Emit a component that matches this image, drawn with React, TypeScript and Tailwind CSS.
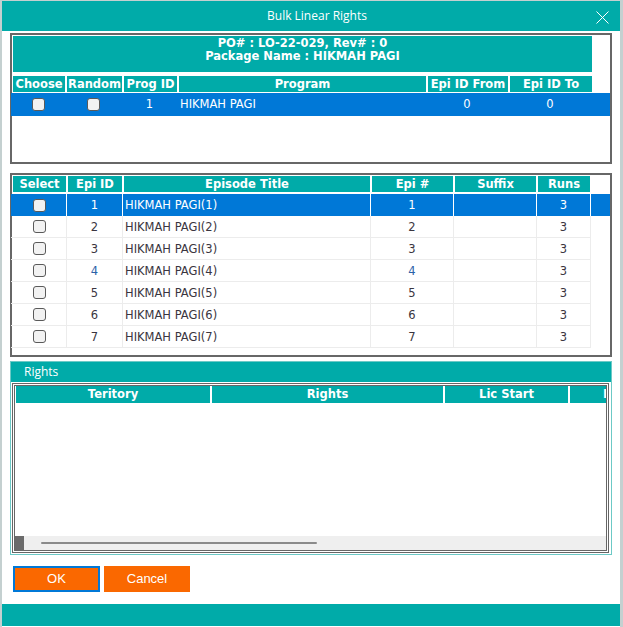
import React from "react";

const TEAL = "bg-[#00aba9]";

function Check() {
  return <span className="inline-block h-[13px] w-[13px] rounded-[3px] border border-[#5a5a5a] bg-[#f2f2f2] align-middle" />;
}

const episodes = [1, 2, 3, 4, 5, 6, 7];

// column widths in the episode grid (cell incl. its divider)
const epiCols = ["w-[56px]", "w-[56px]", "w-[248px]", "w-[83px]", "w-[83px]", "w-[54px]"];

export default function App() {
  return (
    <div className="h-[627px] w-[623px] overflow-hidden bg-[#c4d0d0] pl-[2px] pt-[1px] font-['DejaVu_Sans',sans-serif]">
      <div className="flex h-[626px] w-[618px] flex-col bg-white">
        {/* title bar */}
        <div className={`relative flex h-[30px] shrink-0 items-center justify-center ${TEAL} pl-[12px] font-['Open_Sans',sans-serif] text-[12px] text-white`}>
          Bulk Linear Rights
          <svg className="absolute right-[11px] top-[10px]" width="13" height="13" viewBox="0 0 13 13">
            <path d="M0.5 0.5 L12.5 12.5 M12.5 0.5 L0.5 12.5" stroke="white" strokeWidth="1" />
          </svg>
        </div>

        <div className="flex flex-col pl-[8px]">
          {/* program section */}
          <div className="mt-[2px] h-[131px] w-[602px] border-2 border-[#676767] pt-[1px]">
            <div className={`ml-px h-[36px] w-[579px] ${TEAL} pt-px text-center text-[11.5px] font-bold leading-[13px] text-white`}>
              <div>PO# : LO-22-029, Rev# : 0</div>
              <div>Package Name : HIKMAH PAGI</div>
            </div>
            <div className="ml-px mt-[4px] flex h-[16px] gap-[2px] text-center text-[11.5px] font-bold leading-[16px] text-white">
              <div className={`w-[52px] ${TEAL}`}>Choose</div>
              <div className={`w-[55px] ${TEAL}`}>Random</div>
              <div className={`w-[53px] ${TEAL}`}>Prog ID</div>
              <div className={`w-[247px] ${TEAL}`}>Program</div>
              <div className={`w-[80px] ${TEAL}`}>Epi ID From</div>
              <div className={`w-[82px] ${TEAL}`}>Epi ID To</div>
            </div>
            <div className="-ml-px mt-px flex h-[23px] items-center bg-[#0078d7] text-[11.5px] text-white">
              <div className="flex w-[54px] justify-center pl-px"><Check /></div>
              <div className="flex w-[57px] justify-center"><Check /></div>
              <div className="w-[55px] text-center">1</div>
              <div className="w-[249px] pl-[3px]">HIKMAH PAGI</div>
              <div className="w-[82px] text-center">0</div>
              <div className="w-[84px] text-center">0</div>
            </div>
          </div>

          {/* episodes section */}
          <div className="mt-[9px] h-[184px] w-[602px] border-2 border-[#676767] pt-[1px]">
            <div className="ml-px flex h-[16px] gap-[2px] text-center text-[11.5px] font-bold leading-[16px] text-white">
              <div className={`w-[53px] ${TEAL}`}>Select</div>
              <div className={`w-[54px] ${TEAL}`}>Epi ID</div>
              <div className={`w-[246px] ${TEAL}`}>Episode Title</div>
              <div className={`w-[81px] ${TEAL}`}>Epi #</div>
              <div className={`w-[81px] ${TEAL}`}>Suffix</div>
              <div className={`w-[52px] ${TEAL}`}>Runs</div>
            </div>
            <div className="mt-[2px] flex flex-col">
              {episodes.map((n) => {
                const sel = n === 1;
                const cell = sel
                  ? "h-[22px] border-r border-white"
                  : "h-[22px] border-r border-b border-[#ececec]";
                const txt = sel ? "text-white" : n === 4 ? "text-[#2b62a8]" : "text-[#3a3540]";
                return (
                  <div key={n} className={`-ml-px flex items-center text-[11.5px] leading-[22px] ${txt} ${sel ? "bg-[#0078d7]" : ""}`}>
                    <div className={`${epiCols[0]} ${cell} flex items-center justify-center pl-px`}><Check /></div>
                    <div className={`${epiCols[1]} ${cell} text-center`}>{n}</div>
                    <div className={`${epiCols[2]} ${cell} pl-[2px] ${sel ? "text-white" : "text-[#3a3540]"}`}>HIKMAH PAGI({n})</div>
                    <div className={`${epiCols[3]} ${cell} text-center`}>{n}</div>
                    <div className={`${epiCols[4]} ${cell}`} />
                    <div className={`${epiCols[5]} ${cell} text-center ${sel ? "text-white" : "text-[#3a3540]"}`}>3</div>
                    <div className="h-[22px] flex-1" />
                  </div>
                );
              })}
            </div>
          </div>

          {/* rights section */}
          <div className="mt-[4px] flex h-[194px] w-[602px] flex-col border border-[#6cc9c6]">
            <div className={`h-[20px] shrink-0 ${TEAL} pl-[13px] font-['Open_Sans',sans-serif] text-[12px] leading-[20px] text-white`}>
              Rights
            </div>
            <div className="mb-px ml-px mr-[2px] mt-px flex flex-1 flex-col overflow-hidden border-[3px] border-double border-[#666]">
              <div className="flex h-[17px] shrink-0 gap-[2px] overflow-hidden pl-px text-center text-[11.5px] font-bold leading-[17px] text-white">
                <div className={`w-[194px] shrink-0 ${TEAL}`}>Teritory</div>
                <div className={`w-[231px] shrink-0 ${TEAL}`}>Rights</div>
                <div className={`w-[123px] shrink-0 ${TEAL}`}>Lic Start</div>
                <div className={`w-[123px] shrink-0 ${TEAL} pl-[33px] text-left`}>Lic End</div>
              </div>
              <div className="flex-1" />
              <div className="flex h-[14px] shrink-0 items-center bg-[#efefef]">
                <div className="h-full w-[9px] bg-[#6b6b6b]" />
                <div className="ml-[17px] h-[2px] w-[276px] rounded-full bg-[#8a8a8a]" />
              </div>
            </div>
          </div>

          {/* buttons */}
          <div className="mt-[11px] flex h-[26px] gap-[4px] pl-[3px] font-['Liberation_Sans',sans-serif] text-[13px] text-white">
            <button className="h-[26px] w-[87px] border-2 border-[#0078d7] bg-[#fa6800]">OK</button>
            <button className="h-[26px] w-[86px] bg-[#fa6800]">Cancel</button>
          </div>
        </div>

        <div className={`mt-[12px] h-[22px] ${TEAL}`} />
      </div>
    </div>
  );
}
